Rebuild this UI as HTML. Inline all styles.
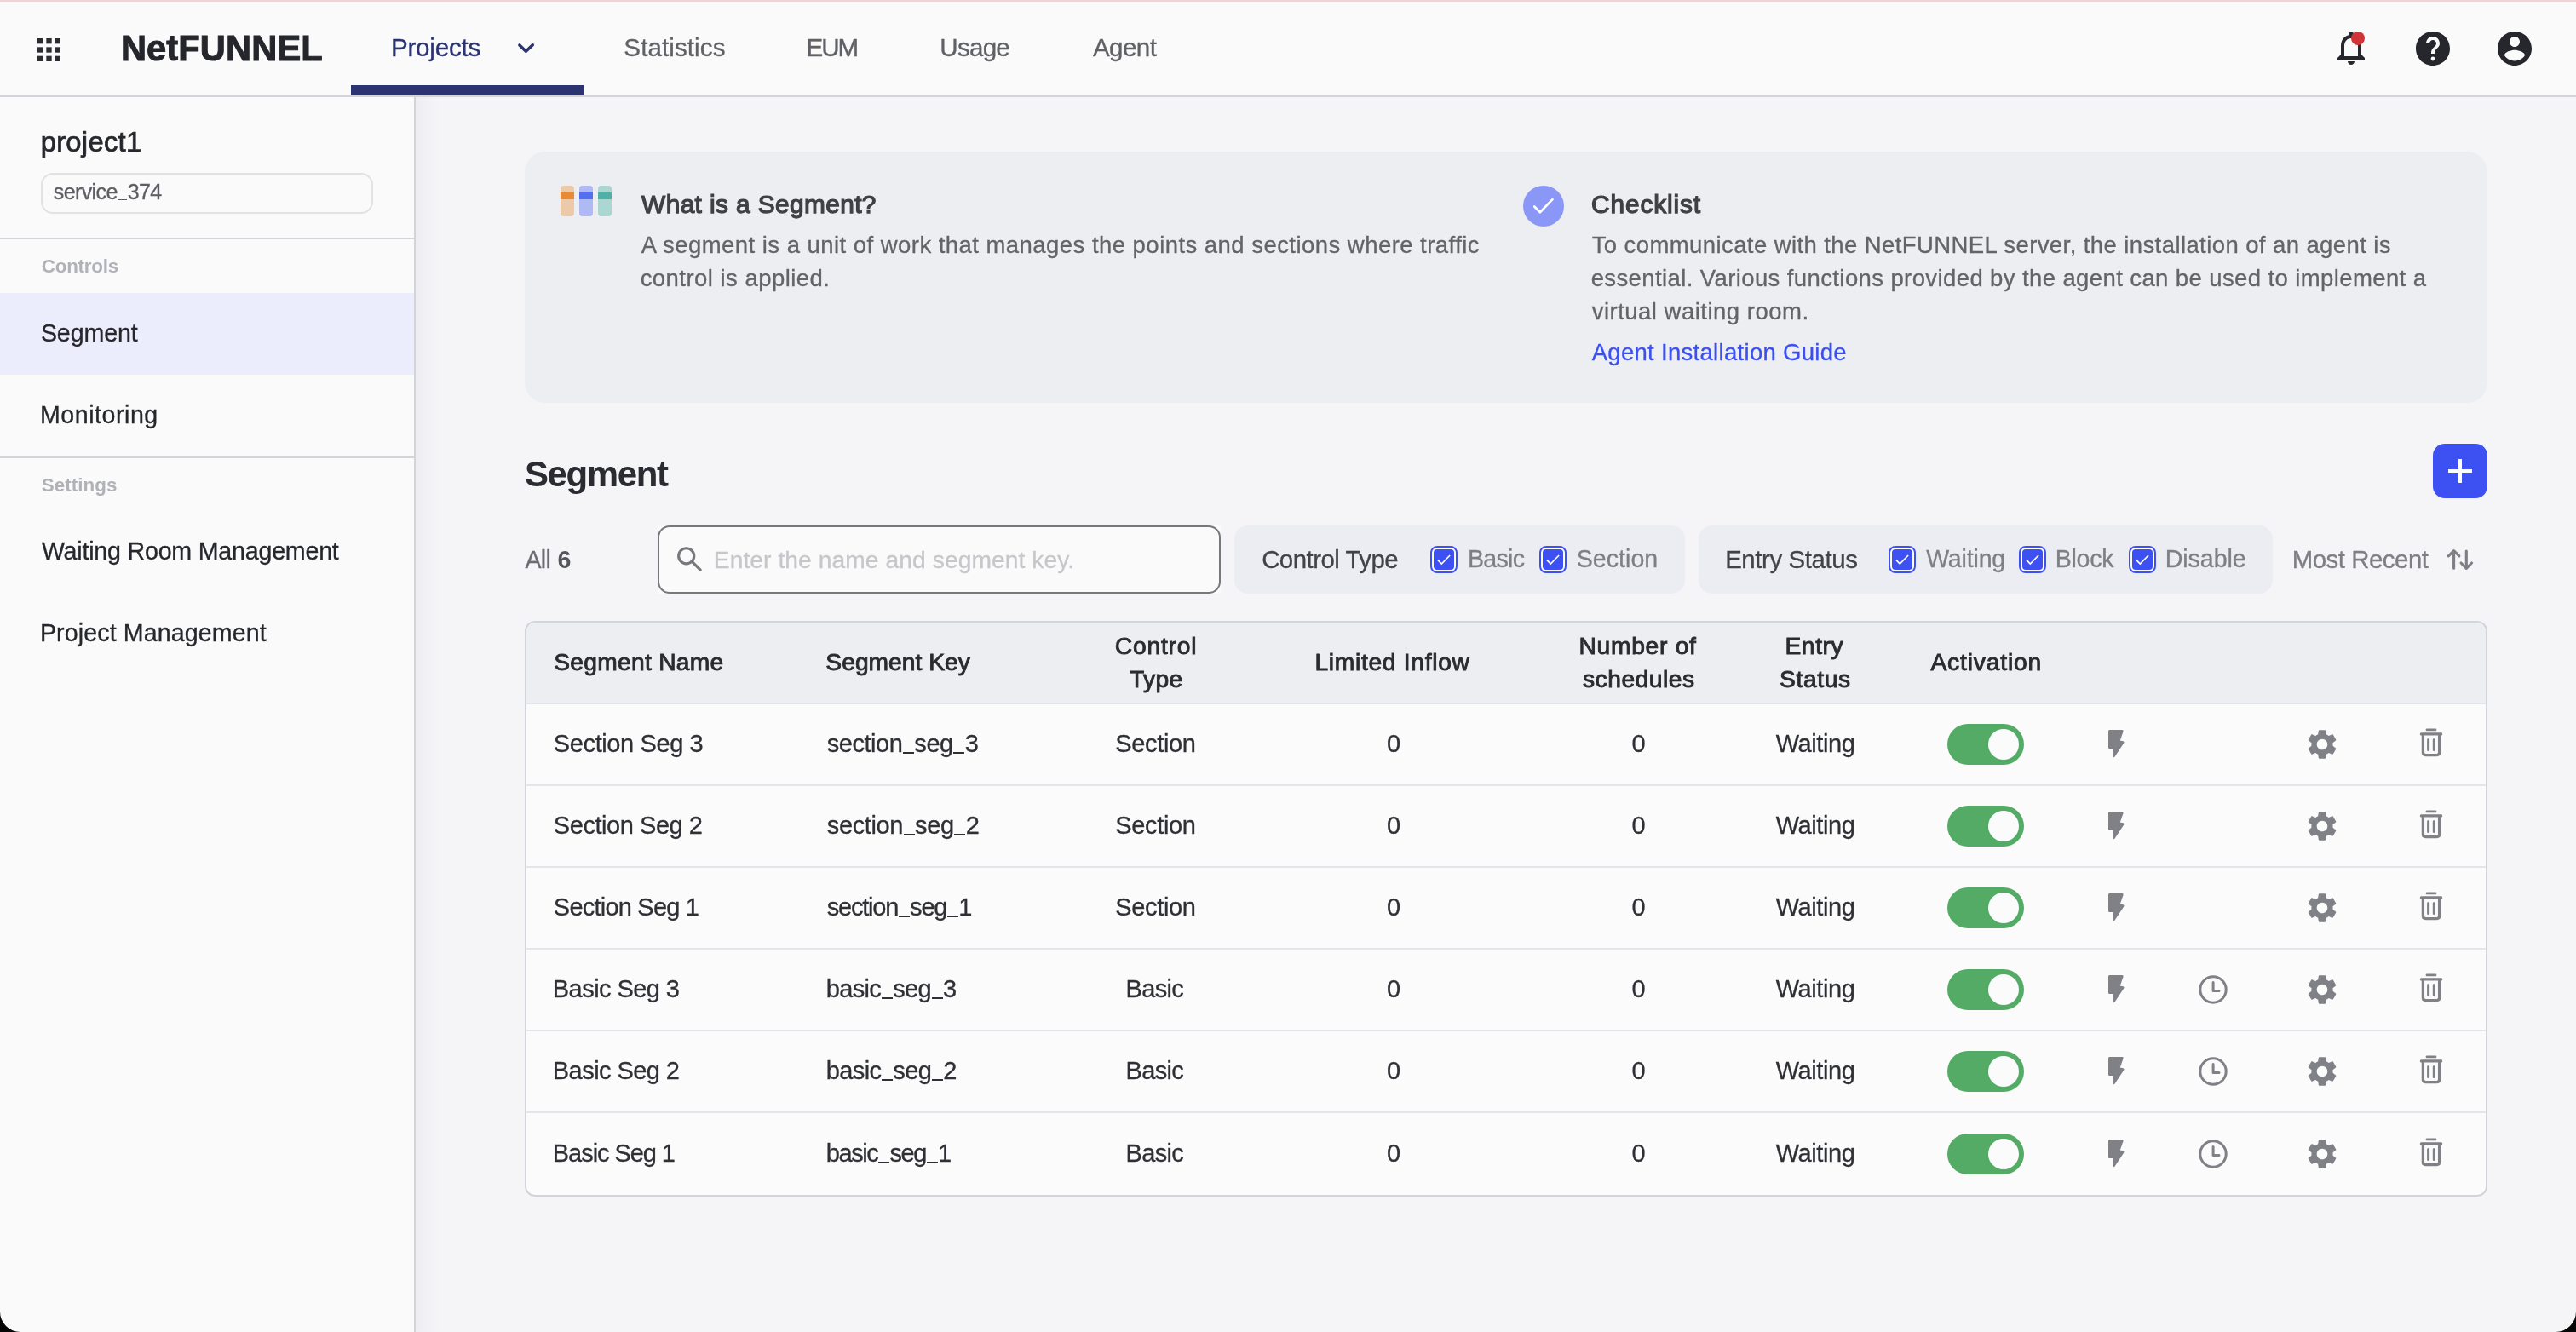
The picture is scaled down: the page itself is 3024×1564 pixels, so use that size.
<!DOCTYPE html>
<html lang="en">
<head>
<meta charset="utf-8">
<title>NetFUNNEL - Segment</title>
<style>
*{box-sizing:border-box;margin:0;padding:0}
html,body{width:3024px;height:1564px;overflow:hidden}
body{position:relative;background:#f5f5f8;font-family:"Liberation Sans",sans-serif;color:#2a2b31}
.abs,.t,svg.i{position:absolute}
.t{white-space:pre;line-height:1;display:block}
.u{display:inline-block;width:12.8px;height:1.9px;background:currentColor;position:relative;top:1.9px;margin:0 .5px 0 .7px}
.txt{position:absolute;left:0;top:0;width:3024px;height:1564px;will-change:transform}
header{position:absolute;left:0;top:0;width:3024px;height:114px;background:#fafafa;border-bottom:2px solid #d3d4d9}
.topline{position:absolute;left:0;top:0;width:3024px;height:2px;background:#f3d2d2}
.tab-on{position:absolute;left:412px;top:100px;width:273px;height:12px;background:#2b3370}
aside{position:absolute;left:0;top:114px;width:488px;height:1450px;background:#fafafa;border-right:2px solid #d3d4d9}
.hr{position:absolute;left:0;width:486px;height:2px;background:#d3d4d9}
.side-on{position:absolute;left:0;top:344px;width:486px;height:96px;background:#ecedfc}
.sel{position:absolute;left:48px;top:203px;width:390px;height:48px;border:2px solid #e1e1e6;border-radius:14px;background:#fafafa}
.info{position:absolute;left:616px;top:178px;width:2304px;height:295px;border-radius:24px;background:#edeef2}
.bar{position:absolute;top:218px;width:16px;height:36px;border-radius:4px;overflow:hidden}
.bar i{position:absolute;left:0;top:8px;width:16px;height:8px}
.chk-circle{position:absolute;left:1788px;top:218px;width:48px;height:48px;border-radius:50%;background:#8a97f7}
.add{position:absolute;left:2856px;top:521px;width:64px;height:64px;border-radius:14px;background:#3d50f2}
.search-bg{position:absolute;left:772px;top:617px;width:661px;height:80px;background:#fafafa}
.search{position:absolute;left:772px;top:617px;width:661px;height:80px;border:2px solid #77787c;border-radius:14px;background:#fafafa}
.fbox{position:absolute;top:617px;height:80px;border-radius:16px;background:#ecedf2}
.cb{position:absolute;top:641px;width:32px;height:32px;border:2px solid #3d50f2;border-radius:8px;background:#fff}
.cb::before{content:"";position:absolute;left:2px;top:2px;width:24px;height:24px;border-radius:4px;background:#3d50f2}
.cb svg{position:absolute;left:-2px;top:-2px;width:32px;height:32px}
.table{position:absolute;left:616px;top:729px;width:2304px;height:676px;border:2px solid #d3d4d9;border-radius:12px;background:#fbfbfb;overflow:hidden}
.thead{position:absolute;left:0;top:0;width:2300px;height:96px;background:#edeef2;border-bottom:2px solid #e2e3e8}
.sep{position:absolute;left:0;width:2300px;height:2px;background:#e4e4ea}
.tog{position:absolute;left:2286px;width:90px;height:48px;border-radius:24px;background:#54ab65}
.tog::after{content:"";position:absolute;left:48px;top:6px;width:36px;height:36px;border-radius:50%;background:#fbfbfb}
</style>
</head>
<body>
<header>
  <div class="topline"></div>
  <svg class="i" style="left:44px;top:44.700px" width="27" height="27" viewBox="0 0 26.4 26.4" fill="#2b2c31"><rect x="0" y="0" width="6.2" height="6.2"/><rect x="10.1" y="0" width="6.2" height="6.2"/><rect x="20.2" y="0" width="6.2" height="6.2"/><rect x="0" y="10.1" width="6.2" height="6.2"/><rect x="10.1" y="10.1" width="6.2" height="6.2"/><rect x="20.2" y="10.1" width="6.2" height="6.2"/><rect x="0" y="20.2" width="6.2" height="6.2"/><rect x="10.1" y="20.2" width="6.2" height="6.2"/><rect x="20.2" y="20.2" width="6.2" height="6.2"/></svg>
  <svg class="i" style="left:604px;top:46px" width="28" height="22" viewBox="0 0 28 22" fill="none" stroke="#2b3370" stroke-width="3.6" stroke-linecap="round" stroke-linejoin="round"><path d="M5.9 7 L13.4 14.3 L21.3 6.8"/></svg>
  <div class="tab-on"></div>
  <!-- bell -->
  <svg class="i" style="left:2736px;top:32px" width="48" height="48" viewBox="0 0 24 24" fill="#26272c"><path d="M12 22c1.1 0 2-.9 2-2h-4c0 1.1.9 2 2 2zm6-6v-5c0-3.07-1.63-5.64-4.5-6.32V4c0-.83-.67-1.500-1.500-1.500s-1.500.67-1.500 1.500v.68C7.640 5.360 6 7.920 6 11v5l-2 2v1h16v-1l-2-2zm-2 1H8v-6c0-2.480 1.510-4.500 4-4.500s4 2.020 4 4.500v6z"/></svg>
  <div class="abs" style="left:2760px;top:37px;width:16px;height:16px;border-radius:50%;background:#d13438"></div>
  <!-- help -->
  <svg class="i" style="left:2832px;top:33px" width="48" height="48" viewBox="0 0 24 24" fill="#26272c"><path d="M12 2C6.480 2 2 6.480 2 12s4.480 10 10 10 10-4.480 10-10S17.520 2 12 2zm0 17.200a1.200 1.200 0 1 1 0-2.400 1.200 1.200 0 0 1 0 2.400zm3.070-7.950l-.9.920C13.450 12.900 13 13.500 13 15h-2v-.5c0-1.100.45-2.100 1.170-2.830l1.240-1.260c.37-.36.59-.86.59-1.410 0-1.100-.9-2-2-2s-2 .9-2 2H8c0-2.210 1.790-4 4-4s4 1.790 4 4c0 .88-.36 1.680-.93 2.250z"/></svg>
  <!-- account -->
  <svg class="i" style="left:2928px;top:33px" width="48" height="48" viewBox="0 0 24 24" fill="#26272c"><path d="M12 2C6.480 2 2 6.480 2 12s4.480 10 10 10 10-4.480 10-10S17.520 2 12 2zm0 3c1.660 0 3 1.340 3 3s-1.340 3-3 3-3-1.340-3-3 1.340-3 3-3zm0 14.200c-2.500 0-4.710-1.280-6-3.220.03-1.990 4-3.080 6-3.080 1.990 0 5.970 1.090 6 3.080-1.290 1.940-3.500 3.220-6 3.220z"/></svg>
</header>
<aside>
  <div class="sel" style="top:89px"></div>
  <div class="hr" style="top:165px"></div>
  <div class="side-on" style="top:230px"></div>
  <div class="hr" style="top:422px"></div>
</aside>
<main>
  <div class="abs" style="left:488px;top:114px;width:30px;height:1450px;background:linear-gradient(90deg,rgba(40,40,60,.035),rgba(40,40,60,.012) 60%,rgba(40,40,60,0))"></div>
  <section class="info">
  </section>
  <div class="bar" style="left:658px;background:#ecc9a9"><i style="background:#e98b35"></i></div>
  <div class="bar" style="left:680px;background:#afb9f3"><i style="background:#5470f0"></i></div>
  <div class="bar" style="left:702px;background:#acd6d2"><i style="background:#4fb0a8"></i></div>
  <div class="chk-circle"><svg class="i" style="left:0;top:0" width="48" height="48" viewBox="0 0 48 48" fill="none" stroke="#fff" stroke-width="2.700" stroke-linecap="round" stroke-linejoin="round"><path d="M13.200 24.500 L19.900 31.200 L34.500 16.100"/></svg></div>
  <div class="add"><svg class="i" style="left:8px;top:8px" width="48" height="48" viewBox="0 0 24 24" fill="#fff"><path d="M19 13h-6v6h-2v-6H5v-2h6V5h2v6h6v2z"/></svg></div>
  <div class="search-bg"></div>
  <div class="search"></div>
  <svg class="i" style="left:790px;top:637px" width="40" height="40" viewBox="0 0 40 40" fill="none" stroke="#77787d" stroke-width="3.2" stroke-linecap="round"><circle cx="15.700" cy="15.800" r="9.050"/><path d="M22.300 22.400 L32.200 32.200"/></svg>
  <div class="fbox" style="left:1449px;width:529px"></div>
  <div class="fbox" style="left:1994px;width:674px"></div>
  <div class="cb" style="left:1679px"><svg viewBox="0 0 32 32" fill="none" stroke="#fff" stroke-width="1.7"><path d="M8.800 16.300 L13.300 21 L23.100 11"/></svg></div>
  <div class="cb" style="left:1807px"><svg viewBox="0 0 32 32" fill="none" stroke="#fff" stroke-width="1.7"><path d="M8.800 16.300 L13.300 21 L23.100 11"/></svg></div>
  <div class="cb" style="left:2217px"><svg viewBox="0 0 32 32" fill="none" stroke="#fff" stroke-width="1.7"><path d="M8.800 16.300 L13.300 21 L23.100 11"/></svg></div>
  <div class="cb" style="left:2370px"><svg viewBox="0 0 32 32" fill="none" stroke="#fff" stroke-width="1.7"><path d="M8.800 16.300 L13.300 21 L23.100 11"/></svg></div>
  <div class="cb" style="left:2499px"><svg viewBox="0 0 32 32" fill="none" stroke="#fff" stroke-width="1.7"><path d="M8.800 16.300 L13.300 21 L23.100 11"/></svg></div>
  <svg class="i" style="left:2864px;top:633px" width="48" height="48" viewBox="0 0 48 48" fill="none" stroke="#7e7f84" stroke-width="3.1" stroke-linecap="round" stroke-linejoin="round"><path d="M16.600 34.200 V14 M10.300 19.900 L16.600 13.600 L22.900 19.900 M31.300 14 V34 M25 28 L31.300 34.300 L37.600 28"/></svg>
  <div class="table">
    <div class="thead"></div>
  </div>
<div class="sep" style="left:618px;top:921px;position:absolute"></div>
<div class="tog" style="top:850px"></div>
<svg class="i" style="left:2474.8px;top:856.9px" width="20" height="33" viewBox="0 0 20 33" fill="#808186"><path d="M1.600 0 H16.200 C17.300 0 17.900 .9 17.500 1.900 L13.800 12.500 L17.300 13.200 C18.400 13.500 18.800 14.500 18.200 15.400 L7.600 31.500 C6.900 32.600 5.300 32.200 5.300 30.900 V22 H1.600 C.7 22 0 21.300 0 20.400 V1.600 C0 .7 .7 0 1.600 0Z"/></svg>
<svg class="i" style="left:2705px;top:853px" width="42" height="42" viewBox="0 0 24 24" fill="#808186"><path d="M19.140 12.940c.04-.3.06-.61.06-.94 0-.32-.02-.64-.07-.94l2.030-1.580c.18-.14.23-.41.12-.61l-1.920-3.320c-.12-.22-.37-.29-.59-.22l-2.390.96c-.5-.38-1.030-.7-1.620-.94l-.36-2.540c-.04-.24-.24-.41-.48-.41h-3.840c-.24 0-.43.17-.47.41l-.36 2.540c-.59.24-1.130.57-1.620.94l-2.390-.96c-.22-.08-.47 0-.59.22L2.740 8.870c-.12.21-.08.47.12.61l2.030 1.580c-.05.3-.09.63-.09.94s.02.64.07.94l-2.030 1.580c-.18.14-.23.41-.12.610l1.920 3.320c.12.220.37.290.59.220l2.390-.96c.5.38 1.030.7 1.620.94l.36 2.540c.05.240.24.410.48.410h3.840c.24 0 .44-.17.470-.41l.36-2.540c.59-.24 1.130-.56 1.620-.94l2.390.96c.22.080.47 0 .59-.22l1.920-3.320c.12-.22.07-.47-.12-.61l-2.010-1.580zM12 15.600c-1.980 0-3.600-1.620-3.600-3.600s1.620-3.600 3.600-3.600 3.600 1.620 3.600 3.600-1.620 3.600-3.600 3.600z"/></svg>
<svg class="i" style="left:2840px;top:855.2px" width="28" height="34" viewBox="0 0 28 34" fill="none" stroke="#808186" stroke-linecap="round" stroke-linejoin="round"><path d="M9 1.900 H19" stroke-width="2.800"/><path d="M2.300 6.900 H25.700" stroke-width="3.100"/><path d="M4.400 8 V28.600 Q4.400 31.600 7.400 31.600 H20.600 Q23.600 31.600 23.600 28.600 V8" stroke-width="3.300"/><path d="M10.600 13.500 V25.500 M17.300 13.500 V25.500" stroke-width="3"/></svg>
<div class="sep" style="left:618px;top:1017px;position:absolute"></div>
<div class="tog" style="top:946px"></div>
<svg class="i" style="left:2474.8px;top:952.9px" width="20" height="33" viewBox="0 0 20 33" fill="#808186"><path d="M1.600 0 H16.200 C17.300 0 17.900 .9 17.500 1.900 L13.800 12.500 L17.300 13.200 C18.400 13.500 18.800 14.500 18.200 15.400 L7.600 31.500 C6.900 32.600 5.300 32.200 5.300 30.900 V22 H1.600 C.7 22 0 21.300 0 20.400 V1.600 C0 .7 .7 0 1.600 0Z"/></svg>
<svg class="i" style="left:2705px;top:949px" width="42" height="42" viewBox="0 0 24 24" fill="#808186"><path d="M19.140 12.940c.04-.3.06-.61.06-.94 0-.32-.02-.64-.07-.94l2.030-1.580c.18-.14.23-.41.12-.61l-1.920-3.320c-.12-.22-.37-.29-.59-.22l-2.390.96c-.5-.38-1.030-.7-1.620-.94l-.36-2.540c-.04-.24-.24-.41-.48-.41h-3.840c-.24 0-.43.17-.47.41l-.36 2.540c-.59.24-1.130.57-1.620.94l-2.390-.96c-.22-.08-.47 0-.59.22L2.740 8.870c-.12.21-.08.47.12.61l2.030 1.580c-.05.3-.09.63-.09.94s.02.64.07.94l-2.030 1.580c-.18.14-.23.41-.12.610l1.920 3.320c.12.220.37.290.59.220l2.390-.96c.5.38 1.030.7 1.620.94l.36 2.540c.05.240.24.410.48.410h3.840c.24 0 .44-.17.470-.41l.36-2.540c.59-.24 1.130-.56 1.620-.94l2.390.96c.22.080.47 0 .59-.22l1.920-3.320c.12-.22.07-.47-.12-.61l-2.010-1.580zM12 15.600c-1.980 0-3.600-1.620-3.600-3.600s1.620-3.600 3.600-3.600 3.600 1.620 3.600 3.600-1.620 3.600-3.600 3.600z"/></svg>
<svg class="i" style="left:2840px;top:951.2px" width="28" height="34" viewBox="0 0 28 34" fill="none" stroke="#808186" stroke-linecap="round" stroke-linejoin="round"><path d="M9 1.900 H19" stroke-width="2.800"/><path d="M2.300 6.900 H25.700" stroke-width="3.100"/><path d="M4.400 8 V28.600 Q4.400 31.600 7.400 31.600 H20.600 Q23.600 31.600 23.600 28.600 V8" stroke-width="3.300"/><path d="M10.600 13.500 V25.500 M17.300 13.500 V25.500" stroke-width="3"/></svg>
<div class="sep" style="left:618px;top:1113px;position:absolute"></div>
<div class="tog" style="top:1042px"></div>
<svg class="i" style="left:2474.8px;top:1048.9px" width="20" height="33" viewBox="0 0 20 33" fill="#808186"><path d="M1.600 0 H16.200 C17.300 0 17.900 .9 17.500 1.900 L13.800 12.500 L17.300 13.200 C18.400 13.500 18.800 14.500 18.200 15.400 L7.600 31.500 C6.900 32.600 5.300 32.200 5.300 30.900 V22 H1.600 C.7 22 0 21.300 0 20.400 V1.600 C0 .7 .7 0 1.600 0Z"/></svg>
<svg class="i" style="left:2705px;top:1045px" width="42" height="42" viewBox="0 0 24 24" fill="#808186"><path d="M19.140 12.940c.04-.3.06-.61.06-.94 0-.32-.02-.64-.07-.94l2.030-1.580c.18-.14.23-.41.12-.61l-1.920-3.320c-.12-.22-.37-.29-.59-.22l-2.390.96c-.5-.38-1.030-.7-1.620-.94l-.36-2.540c-.04-.24-.24-.41-.48-.41h-3.840c-.24 0-.43.17-.47.41l-.36 2.540c-.59.24-1.130.57-1.620.94l-2.390-.96c-.22-.08-.47 0-.59.22L2.740 8.870c-.12.21-.08.47.12.61l2.030 1.580c-.05.3-.09.63-.09.94s.02.64.07.94l-2.030 1.580c-.18.14-.23.41-.12.610l1.920 3.320c.12.220.37.290.59.220l2.390-.96c.5.38 1.030.7 1.620.94l.36 2.540c.05.240.24.410.48.410h3.840c.24 0 .44-.17.470-.41l.36-2.540c.59-.24 1.130-.56 1.620-.94l2.390.96c.22.080.47 0 .59-.22l1.920-3.320c.12-.22.07-.47-.12-.61l-2.010-1.580zM12 15.600c-1.980 0-3.600-1.620-3.600-3.600s1.620-3.600 3.600-3.600 3.600 1.620 3.600 3.600-1.620 3.600-3.600 3.600z"/></svg>
<svg class="i" style="left:2840px;top:1047.2px" width="28" height="34" viewBox="0 0 28 34" fill="none" stroke="#808186" stroke-linecap="round" stroke-linejoin="round"><path d="M9 1.900 H19" stroke-width="2.800"/><path d="M2.300 6.900 H25.700" stroke-width="3.100"/><path d="M4.400 8 V28.600 Q4.400 31.600 7.400 31.600 H20.600 Q23.600 31.600 23.600 28.600 V8" stroke-width="3.300"/><path d="M10.600 13.500 V25.500 M17.300 13.500 V25.500" stroke-width="3"/></svg>
<div class="sep" style="left:618px;top:1209px;position:absolute"></div>
<div class="tog" style="top:1138px"></div>
<svg class="i" style="left:2474.8px;top:1144.9px" width="20" height="33" viewBox="0 0 20 33" fill="#808186"><path d="M1.600 0 H16.200 C17.300 0 17.900 .9 17.500 1.900 L13.800 12.500 L17.300 13.200 C18.400 13.500 18.800 14.500 18.200 15.400 L7.600 31.500 C6.900 32.600 5.300 32.200 5.300 30.900 V22 H1.600 C.7 22 0 21.300 0 20.400 V1.600 C0 .7 .7 0 1.600 0Z"/></svg>
<svg class="i" style="left:2580.1px;top:1143.7px" width="36" height="36" viewBox="0 0 36 36" fill="none" stroke="#808186" stroke-width="3" stroke-linecap="round" stroke-linejoin="round"><circle cx="18" cy="18" r="15.200"/><path d="M18.100 9.600 V19.600 H25"/></svg>
<svg class="i" style="left:2705px;top:1141px" width="42" height="42" viewBox="0 0 24 24" fill="#808186"><path d="M19.140 12.940c.04-.3.06-.61.06-.94 0-.32-.02-.64-.07-.94l2.030-1.580c.18-.14.23-.41.12-.61l-1.920-3.320c-.12-.22-.37-.29-.59-.22l-2.390.96c-.5-.38-1.030-.7-1.620-.94l-.36-2.540c-.04-.24-.24-.41-.48-.41h-3.840c-.24 0-.43.17-.47.41l-.36 2.540c-.59.24-1.130.57-1.620.94l-2.390-.96c-.22-.08-.47 0-.59.22L2.740 8.870c-.12.21-.08.47.12.61l2.030 1.580c-.05.3-.09.63-.09.94s.02.64.07.94l-2.030 1.580c-.18.14-.23.41-.12.610l1.920 3.320c.12.220.37.290.59.220l2.390-.96c.5.38 1.030.7 1.620.94l.36 2.540c.05.240.24.410.48.410h3.840c.24 0 .44-.17.470-.41l.36-2.540c.59-.24 1.130-.56 1.620-.94l2.390.96c.22.080.47 0 .59-.22l1.920-3.320c.12-.22.07-.47-.12-.61l-2.010-1.580zM12 15.600c-1.980 0-3.600-1.620-3.600-3.600s1.620-3.600 3.600-3.600 3.600 1.620 3.600 3.600-1.620 3.600-3.600 3.600z"/></svg>
<svg class="i" style="left:2840px;top:1143.2px" width="28" height="34" viewBox="0 0 28 34" fill="none" stroke="#808186" stroke-linecap="round" stroke-linejoin="round"><path d="M9 1.900 H19" stroke-width="2.800"/><path d="M2.300 6.900 H25.700" stroke-width="3.100"/><path d="M4.400 8 V28.600 Q4.400 31.600 7.400 31.600 H20.600 Q23.600 31.600 23.600 28.600 V8" stroke-width="3.300"/><path d="M10.600 13.500 V25.500 M17.300 13.500 V25.500" stroke-width="3"/></svg>
<div class="sep" style="left:618px;top:1305px;position:absolute"></div>
<div class="tog" style="top:1234px"></div>
<svg class="i" style="left:2474.8px;top:1240.9px" width="20" height="33" viewBox="0 0 20 33" fill="#808186"><path d="M1.600 0 H16.200 C17.300 0 17.900 .9 17.500 1.900 L13.800 12.500 L17.300 13.200 C18.400 13.500 18.800 14.500 18.200 15.400 L7.600 31.500 C6.900 32.600 5.300 32.200 5.300 30.900 V22 H1.600 C.7 22 0 21.300 0 20.400 V1.600 C0 .7 .7 0 1.600 0Z"/></svg>
<svg class="i" style="left:2580.1px;top:1239.7px" width="36" height="36" viewBox="0 0 36 36" fill="none" stroke="#808186" stroke-width="3" stroke-linecap="round" stroke-linejoin="round"><circle cx="18" cy="18" r="15.200"/><path d="M18.100 9.600 V19.600 H25"/></svg>
<svg class="i" style="left:2705px;top:1237px" width="42" height="42" viewBox="0 0 24 24" fill="#808186"><path d="M19.140 12.940c.04-.3.06-.61.06-.94 0-.32-.02-.64-.07-.94l2.030-1.580c.18-.14.23-.41.12-.61l-1.920-3.320c-.12-.22-.37-.29-.59-.22l-2.390.96c-.5-.38-1.030-.7-1.620-.94l-.36-2.540c-.04-.24-.24-.41-.48-.41h-3.840c-.24 0-.43.17-.47.41l-.36 2.540c-.59.24-1.130.57-1.620.94l-2.390-.96c-.22-.08-.47 0-.59.22L2.740 8.870c-.12.21-.08.47.12.61l2.030 1.580c-.05.3-.09.63-.09.94s.02.64.07.94l-2.030 1.580c-.18.14-.23.41-.12.610l1.920 3.320c.12.220.37.290.59.220l2.390-.96c.5.38 1.030.7 1.620.94l.36 2.540c.05.240.24.410.48.410h3.840c.24 0 .44-.17.470-.41l.36-2.540c.59-.24 1.130-.56 1.620-.94l2.390.96c.22.080.47 0 .59-.22l1.920-3.320c.12-.22.07-.47-.12-.61l-2.010-1.580zM12 15.600c-1.980 0-3.600-1.620-3.600-3.600s1.620-3.600 3.600-3.600 3.600 1.620 3.600 3.600-1.620 3.600-3.600 3.600z"/></svg>
<svg class="i" style="left:2840px;top:1239.2px" width="28" height="34" viewBox="0 0 28 34" fill="none" stroke="#808186" stroke-linecap="round" stroke-linejoin="round"><path d="M9 1.900 H19" stroke-width="2.800"/><path d="M2.300 6.900 H25.700" stroke-width="3.100"/><path d="M4.400 8 V28.600 Q4.400 31.600 7.400 31.600 H20.600 Q23.600 31.600 23.600 28.600 V8" stroke-width="3.300"/><path d="M10.600 13.500 V25.500 M17.300 13.500 V25.500" stroke-width="3"/></svg>
<div class="tog" style="top:1331px"></div>
<svg class="i" style="left:2474.8px;top:1337.9px" width="20" height="33" viewBox="0 0 20 33" fill="#808186"><path d="M1.600 0 H16.200 C17.300 0 17.900 .9 17.500 1.900 L13.800 12.500 L17.300 13.200 C18.400 13.500 18.800 14.500 18.200 15.400 L7.600 31.500 C6.900 32.600 5.300 32.200 5.300 30.900 V22 H1.600 C.7 22 0 21.300 0 20.400 V1.600 C0 .7 .7 0 1.600 0Z"/></svg>
<svg class="i" style="left:2580.1px;top:1336.7px" width="36" height="36" viewBox="0 0 36 36" fill="none" stroke="#808186" stroke-width="3" stroke-linecap="round" stroke-linejoin="round"><circle cx="18" cy="18" r="15.200"/><path d="M18.100 9.600 V19.600 H25"/></svg>
<svg class="i" style="left:2705px;top:1334px" width="42" height="42" viewBox="0 0 24 24" fill="#808186"><path d="M19.140 12.940c.04-.3.06-.61.06-.94 0-.32-.02-.64-.07-.94l2.030-1.580c.18-.14.23-.41.12-.61l-1.920-3.320c-.12-.22-.37-.29-.59-.22l-2.390.96c-.5-.38-1.030-.7-1.620-.94l-.36-2.540c-.04-.24-.24-.41-.48-.41h-3.840c-.24 0-.43.17-.47.41l-.36 2.540c-.59.24-1.130.57-1.620.94l-2.390-.96c-.22-.08-.47 0-.59.22L2.740 8.870c-.12.21-.08.47.12.61l2.030 1.580c-.05.3-.09.63-.09.94s.02.64.07.94l-2.030 1.580c-.18.14-.23.41-.12.610l1.920 3.320c.12.220.37.290.59.220l2.390-.96c.5.38 1.030.7 1.620.94l.36 2.540c.05.240.24.410.48.410h3.840c.24 0 .44-.17.470-.41l.36-2.540c.59-.24 1.130-.56 1.620-.94l2.390.96c.22.080.47 0 .59-.22l1.920-3.320c.12-.22.07-.47-.12-.61l-2.010-1.580zM12 15.600c-1.980 0-3.600-1.620-3.600-3.600s1.620-3.600 3.600-3.600 3.600 1.620 3.600 3.600-1.620 3.600-3.600 3.600z"/></svg>
<svg class="i" style="left:2840px;top:1336.2px" width="28" height="34" viewBox="0 0 28 34" fill="none" stroke="#808186" stroke-linecap="round" stroke-linejoin="round"><path d="M9 1.900 H19" stroke-width="2.800"/><path d="M2.300 6.900 H25.700" stroke-width="3.100"/><path d="M4.400 8 V28.600 Q4.400 31.600 7.400 31.600 H20.600 Q23.600 31.600 23.600 28.600 V8" stroke-width="3.300"/><path d="M10.600 13.500 V25.500 M17.300 13.500 V25.500" stroke-width="3"/></svg>
</main>
<div class="txt">
<span class="t" style="left:141.90px;top:35.89px;font-size:41.6px;color:#25262c;letter-spacing:0.139px;font-weight:700;-webkit-text-stroke:1.0px #25262c;">NetFUNNEL</span>
<span class="t" style="left:458.90px;top:40.94px;font-size:29.6px;color:#2b3370;letter-spacing:-0.201px;-webkit-text-stroke:0.30px #2b3370;">Projects</span>
<span class="t" style="left:732.35px;top:40.64px;font-size:29.6px;color:#606166;letter-spacing:0.077px;-webkit-text-stroke:0.30px #606166;">Statistics</span>
<span class="t" style="left:946.55px;top:40.64px;font-size:29.6px;color:#606166;letter-spacing:-2.055px;-webkit-text-stroke:0.30px #606166;">EUM</span>
<span class="t" style="left:1103.35px;top:40.64px;font-size:29.6px;color:#606166;letter-spacing:-0.771px;-webkit-text-stroke:0.30px #606166;">Usage</span>
<span class="t" style="left:1282.95px;top:40.64px;font-size:29.6px;color:#606166;letter-spacing:-0.579px;-webkit-text-stroke:0.30px #606166;">Agent</span>
<span class="t" style="left:47.66px;top:151.33px;font-size:32.8px;color:#26272c;letter-spacing:0.262px;-webkit-text-stroke:0.73px #26272c;">project1</span>
<span class="t" style="left:62.85px;top:212.74px;font-size:25.0px;color:#5d5e63;letter-spacing:-0.622px;-webkit-text-stroke:0.30px #5d5e63;">service<i class="u" style="width:10.9px;height:1.6px;top:1.6px"></i>374</span>
<span class="t" style="left:48.75px;top:302.04px;font-size:22.4px;color:#b1b2b7;letter-spacing:-0.227px;font-weight:700;">Controls</span>
<span class="t" style="left:47.90px;top:377.39px;font-size:28.6px;color:#26272c;letter-spacing:-0.092px;-webkit-text-stroke:0.30px #26272c;">Segment</span>
<span class="t" style="left:46.90px;top:473.29px;font-size:28.6px;color:#26272c;letter-spacing:0.539px;-webkit-text-stroke:0.30px #26272c;">Monitoring</span>
<span class="t" style="left:48.75px;top:559.04px;font-size:22.4px;color:#b1b2b7;letter-spacing:0.054px;font-weight:700;">Settings</span>
<span class="t" style="left:48.90px;top:632.99px;font-size:28.6px;color:#26272c;letter-spacing:-0.202px;-webkit-text-stroke:0.30px #26272c;">Waiting Room Management</span>
<span class="t" style="left:46.90px;top:729.04px;font-size:28.6px;color:#26272c;letter-spacing:0.121px;-webkit-text-stroke:0.30px #26272c;">Project Management</span>
<span class="t" style="left:753.12px;top:224.77px;font-size:29.8px;color:#3f4045;letter-spacing:0.413px;-webkit-text-stroke:1.25px #3f4045;">What is a Segment?</span>
<span class="t" style="left:752.65px;top:274.22px;font-size:27.5px;color:#636469;letter-spacing:0.457px;-webkit-text-stroke:0.30px #636469;">A segment is a unit of work that manages the points and sections where traffic</span>
<span class="t" style="left:751.65px;top:313.22px;font-size:27.5px;color:#636469;letter-spacing:0.463px;-webkit-text-stroke:0.30px #636469;">control is applied.</span>
<span class="t" style="left:1868.12px;top:224.77px;font-size:29.8px;color:#3f4045;letter-spacing:0.869px;-webkit-text-stroke:1.25px #3f4045;">Checklist</span>
<span class="t" style="left:1868.65px;top:273.72px;font-size:27.5px;color:#636469;letter-spacing:0.410px;-webkit-text-stroke:0.30px #636469;">To communicate with the NetFUNNEL server, the installation of an agent is</span>
<span class="t" style="left:1867.65px;top:312.72px;font-size:27.5px;color:#636469;letter-spacing:0.394px;-webkit-text-stroke:0.30px #636469;">essential. Various functions provided by the agent can be used to implement a</span>
<span class="t" style="left:1868.65px;top:351.52px;font-size:27.5px;color:#636469;letter-spacing:0.495px;-webkit-text-stroke:0.30px #636469;">virtual waiting room.</span>
<span class="t" style="left:1868.65px;top:400.02px;font-size:27.5px;color:#3b4ff0;letter-spacing:0.304px;-webkit-text-stroke:0.30px #3b4ff0;">Agent Installation Guide</span>
<span class="t" style="left:616.00px;top:535.95px;font-size:42.0px;color:#2b2c31;letter-spacing:-1.398px;font-weight:700;">Segment</span>
<span class="t" style="left:616.40px;top:642.79px;font-size:28.6px;color:#6c6d72;letter-spacing:-0.687px;-webkit-text-stroke:0.30px #6c6d72;">All</span>
<span class="t" style="left:654.50px;top:642.79px;font-size:28.6px;color:#56575c;letter-spacing:0.000px;font-weight:700;">6</span>
<span class="t" style="left:837.75px;top:643.13px;font-size:28.2px;color:#c6c7cb;letter-spacing:0.082px;-webkit-text-stroke:0.30px #c6c7cb;">Enter the name and segment key.</span>
<span class="t" style="left:1481.15px;top:642.11px;font-size:29.4px;color:#424348;letter-spacing:-0.507px;-webkit-text-stroke:0.30px #424348;">Control Type</span>
<span class="t" style="left:1722.95px;top:642.29px;font-size:28.6px;color:#7e7f84;letter-spacing:-0.731px;-webkit-text-stroke:0.30px #7e7f84;">Basic</span>
<span class="t" style="left:1850.65px;top:642.29px;font-size:28.6px;color:#7e7f84;letter-spacing:0.038px;-webkit-text-stroke:0.30px #7e7f84;">Section</span>
<span class="t" style="left:2025.15px;top:642.11px;font-size:29.4px;color:#424348;letter-spacing:-0.381px;-webkit-text-stroke:0.30px #424348;">Entry Status</span>
<span class="t" style="left:2261.15px;top:642.29px;font-size:28.6px;color:#7e7f84;letter-spacing:-0.197px;-webkit-text-stroke:0.30px #7e7f84;">Waiting</span>
<span class="t" style="left:2412.65px;top:642.29px;font-size:28.6px;color:#7e7f84;letter-spacing:-0.231px;-webkit-text-stroke:0.30px #7e7f84;">Block</span>
<span class="t" style="left:2541.65px;top:642.29px;font-size:28.6px;color:#7e7f84;letter-spacing:-0.043px;-webkit-text-stroke:0.30px #7e7f84;">Disable</span>
<span class="t" style="left:2690.65px;top:642.11px;font-size:29.4px;color:#7e7f84;letter-spacing:-0.461px;-webkit-text-stroke:0.30px #7e7f84;">Most Recent</span>
<span class="t" style="left:650.16px;top:762.93px;font-size:28.2px;color:#2a2b31;letter-spacing:0.293px;-webkit-text-stroke:0.91px #2a2b31;">Segment Name</span>
<span class="t" style="left:969.36px;top:762.93px;font-size:28.2px;color:#2a2b31;letter-spacing:0.026px;-webkit-text-stroke:0.91px #2a2b31;">Segment Key</span>
<span class="t" style="left:1308.86px;top:744.13px;font-size:28.2px;color:#2a2b31;letter-spacing:0.781px;-webkit-text-stroke:0.91px #2a2b31;">Control</span>
<span class="t" style="left:1325.96px;top:782.63px;font-size:28.2px;color:#2a2b31;letter-spacing:0.352px;-webkit-text-stroke:0.91px #2a2b31;">Type</span>
<span class="t" style="left:1543.46px;top:762.93px;font-size:28.2px;color:#2a2b31;letter-spacing:0.701px;-webkit-text-stroke:0.91px #2a2b31;">Limited Inflow</span>
<span class="t" style="left:1853.46px;top:744.13px;font-size:28.2px;color:#2a2b31;letter-spacing:0.729px;-webkit-text-stroke:0.91px #2a2b31;">Number of</span>
<span class="t" style="left:1857.96px;top:782.63px;font-size:28.2px;color:#2a2b31;letter-spacing:0.532px;-webkit-text-stroke:0.91px #2a2b31;">schedules</span>
<span class="t" style="left:2095.46px;top:744.13px;font-size:28.2px;color:#2a2b31;letter-spacing:0.598px;-webkit-text-stroke:0.91px #2a2b31;">Entry</span>
<span class="t" style="left:2088.96px;top:782.63px;font-size:28.2px;color:#2a2b31;letter-spacing:0.654px;-webkit-text-stroke:0.91px #2a2b31;">Status</span>
<span class="t" style="left:2266.46px;top:762.93px;font-size:28.2px;color:#2a2b31;letter-spacing:0.840px;-webkit-text-stroke:0.91px #2a2b31;">Activation</span>
<span class="t" style="left:649.85px;top:858.65px;font-size:29.0px;color:#2f3035;letter-spacing:-0.395px;-webkit-text-stroke:0.30px #2f3035;">Section Seg 3</span>
<span class="t" style="left:970.75px;top:858.65px;font-size:29.0px;color:#2f3035;letter-spacing:-0.466px;-webkit-text-stroke:0.30px #2f3035;">section<i class="u"></i>seg<i class="u"></i>3</span>
<span class="t" style="left:1309.15px;top:858.65px;font-size:29.0px;color:#2f3035;letter-spacing:-0.317px;-webkit-text-stroke:0.30px #2f3035;">Section</span>
<span class="t" style="left:1628.00px;top:858.65px;font-size:29.0px;color:#2f3035;letter-spacing:0.000px;-webkit-text-stroke:0.30px #2f3035;">0</span>
<span class="t" style="left:1915.50px;top:858.65px;font-size:29.0px;color:#2f3035;letter-spacing:0.000px;-webkit-text-stroke:0.30px #2f3035;">0</span>
<span class="t" style="left:2084.65px;top:858.65px;font-size:29.0px;color:#2f3035;letter-spacing:-0.383px;-webkit-text-stroke:0.30px #2f3035;">Waiting</span>
<span class="t" style="left:649.85px;top:954.65px;font-size:29.0px;color:#2f3035;letter-spacing:-0.453px;-webkit-text-stroke:0.30px #2f3035;">Section Seg 2</span>
<span class="t" style="left:970.75px;top:954.65px;font-size:29.0px;color:#2f3035;letter-spacing:-0.366px;-webkit-text-stroke:0.30px #2f3035;">section<i class="u"></i>seg<i class="u"></i>2</span>
<span class="t" style="left:1309.15px;top:954.65px;font-size:29.0px;color:#2f3035;letter-spacing:-0.317px;-webkit-text-stroke:0.30px #2f3035;">Section</span>
<span class="t" style="left:1628.00px;top:954.65px;font-size:29.0px;color:#2f3035;letter-spacing:0.000px;-webkit-text-stroke:0.30px #2f3035;">0</span>
<span class="t" style="left:1915.50px;top:954.65px;font-size:29.0px;color:#2f3035;letter-spacing:0.000px;-webkit-text-stroke:0.30px #2f3035;">0</span>
<span class="t" style="left:2084.65px;top:954.65px;font-size:29.0px;color:#2f3035;letter-spacing:-0.383px;-webkit-text-stroke:0.30px #2f3035;">Waiting</span>
<span class="t" style="left:649.85px;top:1050.65px;font-size:29.0px;color:#2f3035;letter-spacing:-0.787px;-webkit-text-stroke:0.30px #2f3035;">Section Seg 1</span>
<span class="t" style="left:970.75px;top:1050.65px;font-size:29.0px;color:#2f3035;letter-spacing:-1.216px;-webkit-text-stroke:0.30px #2f3035;">section<i class="u"></i>seg<i class="u"></i>1</span>
<span class="t" style="left:1309.15px;top:1050.65px;font-size:29.0px;color:#2f3035;letter-spacing:-0.317px;-webkit-text-stroke:0.30px #2f3035;">Section</span>
<span class="t" style="left:1628.00px;top:1050.65px;font-size:29.0px;color:#2f3035;letter-spacing:0.000px;-webkit-text-stroke:0.30px #2f3035;">0</span>
<span class="t" style="left:1915.50px;top:1050.65px;font-size:29.0px;color:#2f3035;letter-spacing:0.000px;-webkit-text-stroke:0.30px #2f3035;">0</span>
<span class="t" style="left:2084.65px;top:1050.65px;font-size:29.0px;color:#2f3035;letter-spacing:-0.383px;-webkit-text-stroke:0.30px #2f3035;">Waiting</span>
<span class="t" style="left:648.85px;top:1146.65px;font-size:29.0px;color:#2f3035;letter-spacing:-0.563px;-webkit-text-stroke:0.30px #2f3035;">Basic Seg 3</span>
<span class="t" style="left:969.75px;top:1146.65px;font-size:29.0px;color:#2f3035;letter-spacing:-0.647px;-webkit-text-stroke:0.30px #2f3035;">basic<i class="u"></i>seg<i class="u"></i>3</span>
<span class="t" style="left:1321.55px;top:1146.65px;font-size:29.0px;color:#2f3035;letter-spacing:-0.654px;-webkit-text-stroke:0.30px #2f3035;">Basic</span>
<span class="t" style="left:1628.00px;top:1146.65px;font-size:29.0px;color:#2f3035;letter-spacing:0.000px;-webkit-text-stroke:0.30px #2f3035;">0</span>
<span class="t" style="left:1915.50px;top:1146.65px;font-size:29.0px;color:#2f3035;letter-spacing:0.000px;-webkit-text-stroke:0.30px #2f3035;">0</span>
<span class="t" style="left:2084.65px;top:1146.65px;font-size:29.0px;color:#2f3035;letter-spacing:-0.383px;-webkit-text-stroke:0.30px #2f3035;">Waiting</span>
<span class="t" style="left:648.85px;top:1242.65px;font-size:29.0px;color:#2f3035;letter-spacing:-0.563px;-webkit-text-stroke:0.30px #2f3035;">Basic Seg 2</span>
<span class="t" style="left:969.75px;top:1242.65px;font-size:29.0px;color:#2f3035;letter-spacing:-0.622px;-webkit-text-stroke:0.30px #2f3035;">basic<i class="u"></i>seg<i class="u"></i>2</span>
<span class="t" style="left:1321.55px;top:1242.65px;font-size:29.0px;color:#2f3035;letter-spacing:-0.654px;-webkit-text-stroke:0.30px #2f3035;">Basic</span>
<span class="t" style="left:1628.00px;top:1242.65px;font-size:29.0px;color:#2f3035;letter-spacing:0.000px;-webkit-text-stroke:0.30px #2f3035;">0</span>
<span class="t" style="left:1915.50px;top:1242.65px;font-size:29.0px;color:#2f3035;letter-spacing:0.000px;-webkit-text-stroke:0.30px #2f3035;">0</span>
<span class="t" style="left:2084.65px;top:1242.65px;font-size:29.0px;color:#2f3035;letter-spacing:-0.383px;-webkit-text-stroke:0.30px #2f3035;">Waiting</span>
<span class="t" style="left:648.85px;top:1339.65px;font-size:29.0px;color:#2f3035;letter-spacing:-1.063px;-webkit-text-stroke:0.30px #2f3035;">Basic Seg 1</span>
<span class="t" style="left:969.75px;top:1339.65px;font-size:29.0px;color:#2f3035;letter-spacing:-1.397px;-webkit-text-stroke:0.30px #2f3035;">basic<i class="u"></i>seg<i class="u"></i>1</span>
<span class="t" style="left:1321.55px;top:1339.65px;font-size:29.0px;color:#2f3035;letter-spacing:-0.654px;-webkit-text-stroke:0.30px #2f3035;">Basic</span>
<span class="t" style="left:1628.00px;top:1339.65px;font-size:29.0px;color:#2f3035;letter-spacing:0.000px;-webkit-text-stroke:0.30px #2f3035;">0</span>
<span class="t" style="left:1915.50px;top:1339.65px;font-size:29.0px;color:#2f3035;letter-spacing:0.000px;-webkit-text-stroke:0.30px #2f3035;">0</span>
<span class="t" style="left:2084.65px;top:1339.65px;font-size:29.0px;color:#2f3035;letter-spacing:-0.383px;-webkit-text-stroke:0.30px #2f3035;">Waiting</span>
</div>
<svg class="i" style="left:0;top:1540px" width="24" height="24" viewBox="0 0 24 24" fill="#060606"><path d="M0 0 V24 H24 A24 24 0 0 1 0 0Z"/></svg>
<svg class="i" style="left:3000px;top:1540px" width="24" height="24" viewBox="0 0 24 24" fill="#060606"><path d="M24 0 V24 H0 A24 24 0 0 0 24 0Z"/></svg>
<script>(function(){var w=window.innerWidth||3024;if(Math.abs(w-3024)>1){document.documentElement.style.zoom=String(w/3024);}})();</script>
</body>
</html>
